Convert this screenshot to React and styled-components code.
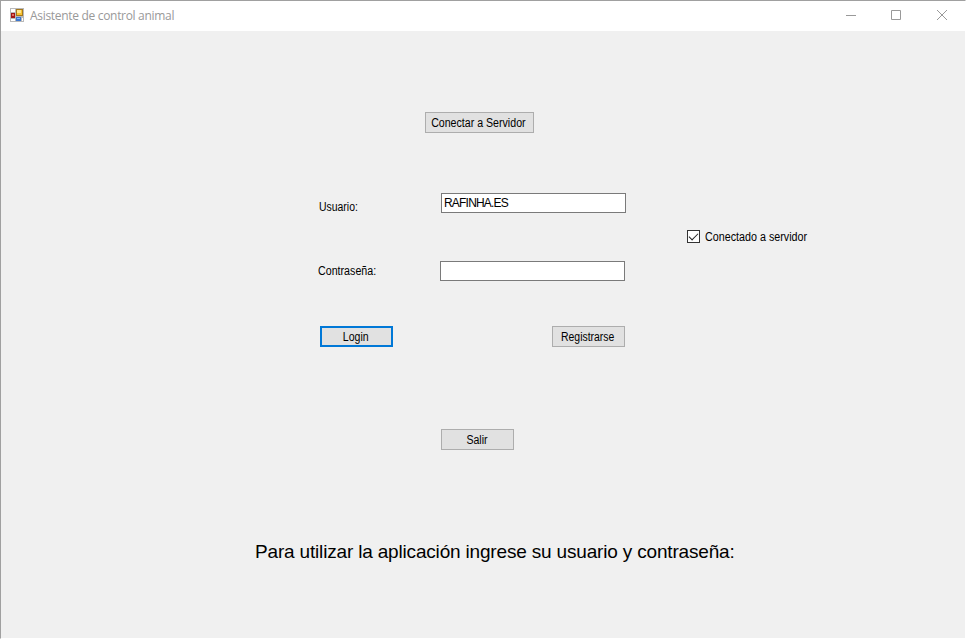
import React, { useState } from "react";
import styled, { createGlobalStyle } from "styled-components";

const GlobalStyle = createGlobalStyle`
  html, body { margin: 0; padding: 0; overflow: hidden; background: #fff; }
  *, *::before, *::after { box-sizing: border-box; }
`;

const Window = styled.main`
  width: 966px;
  height: 639px;
  display: flex;
  flex-direction: column;
  border: 1px solid #a0a0a0;
  border-right-color: #fff;
  border-bottom-color: #fff;
  background: #f0f0f0;
  color: #000;
  font: 12px/15px "Liberation Sans", Arial, sans-serif;
`;

const TitleBar = styled.header`
  height: 30px;
  flex: none;
  display: flex;
  align-items: center;
  padding-left: 9px;
  background: #fff;
`;

const Title = styled.h1`
  flex: 1;
  margin: 0 0 0 5px;
  color: #999;
  font: 400 12px/16px "Open Sans", "Noto Sans", sans-serif;
  letter-spacing: ${(p) => p.$spacing}px;
  white-space: nowrap;
`;

const AppIcon = styled.svg`
  width: 15px;
  height: 15px;
  flex: none;
  margin-bottom: 1px;
`;

const CaptionButton = styled.button`
  width: 46px;
  height: 30px;
  flex: none;
  display: grid;
  place-items: center;
  padding: 0 0 0 ${(p) => p.$shift || 0}px;
  border: 0;
  background: transparent;
  color: #999;
  svg { display: block; margin-top: -2px; }
`;

const Form = styled.form`
  flex: 1;
  display: flex;
  flex-direction: column;
  align-items: flex-start;
  padding-top: 81px;
`;

const Row = styled.div`
  display: flex;
  align-items: flex-start;
  height: ${(p) => p.$height}px;
  margin-top: ${(p) => p.$gap || 0}px;
  padding-left: ${(p) => p.$indent}px;
`;

const Text = styled.span`
  display: inline-block;
  transform: scaleX(${(p) => p.$narrow});
  transform-origin: ${(p) => p.$origin || "center"};
  white-space: nowrap;
`;

const Button = styled.button`
  width: ${(p) => p.$width || 73}px;
  height: 21px;
  display: flex;
  align-items: center;
  justify-content: center;
  margin-left: ${(p) => p.$offset || 0}px;
  padding: 2px ${(p) => p.$shift || 0}px 0 0;
  border: ${(p) => (p.$primary ? "2px solid #0078d7" : "1px solid #adadad")};
  background: #e1e1e1;
  color: #000;
  font: inherit;
  outline: none;
`;

const Label = styled.label`
  width: ${(p) => p.$width}px;
  flex: none;
  padding-top: ${(p) => p.$drop}px;
`;

const Input = styled.input`
  width: 185px;
  height: 20px;
  padding: 0 2px;
  border: 1px solid #7a7a7a;
  border-radius: 0;
  background: #fff;
  color: #000;
  font: inherit;
  letter-spacing: -0.8px;
  outline: none;
`;

const CheckLabel = styled.label`
  display: flex;
  align-items: center;
  gap: 5px;
  height: 15px;
  ${Text} { padding-top: 1px; }
`;

const CheckBox = styled.input`
  appearance: none;
  width: 13px;
  height: 13px;
  margin: 0;
  border: 1px solid #333;
  background: #fff;
  display: grid;
  place-items: center;
  &:checked::before {
    content: "";
    width: 9px;
    height: 5px;
    margin-top: -3px;
    border-left: 1.3px solid #222;
    border-bottom: 1.3px solid #222;
    transform: rotate(-45deg);
  }
`;

const Message = styled.p`
  margin: 91px 0 0 254px;
  font-size: 19px;
  line-height: 22px;
  letter-spacing: ${(p) => p.$spacing}px;
  white-space: nowrap;
`;

function FormIcon() {
  return (
    <AppIcon viewBox="0 0 15 15" shapeRendering="crispEdges">
      <path fill="#b9b9b9" d="M0 0h14v14H0z" />
      <path fill="#fff" d="M1 1h4v3H1zM1 11h4v2H1zM12 10h1v3h-1z" />
      <path fill="#a5781d" d="M6 1h7v7H6z" />
      <path fill="#f8c331" d="M7 2h5v5H7z" />
      <path fill="#ffe58d" d="M7 2h4v3H7z" />
      <path fill="#a11616" d="M1 5h4v5H1z" />
      <path fill="#e36b60" d="M2 6h2v2H2z" />
      <path fill="#3c76cf" d="M6 9h5v4H6z" />
      <path fill="#8bbbf6" d="M7 10h3v1H7z" />
    </AppIcon>
  );
}

export default function App() {
  const [user, setUser] = useState("RAFINHA.ES");
  const [password, setPassword] = useState("");
  const [connected, setConnected] = useState(true);
  return (
    <>
      <GlobalStyle />
      <Window>
        <TitleBar>
          <FormIcon />
          <Title $spacing={-0.31}>Asistente de control animal</Title>
          <CaptionButton aria-label="Minimizar" $shift={2}>
            <svg width="10" height="10" shapeRendering="crispEdges"><path d="M0 5h10v1H0z" fill="currentColor" /></svg>
          </CaptionButton>
          <CaptionButton aria-label="Maximizar">
            <svg width="10" height="10" fill="none" stroke="currentColor"><path d="M.5.5h9v9h-9z" /></svg>
          </CaptionButton>
          <CaptionButton aria-label="Cerrar">
            <svg width="10" height="10" stroke="currentColor"><path d="M0 0l10 10M10 0L0 10" /></svg>
          </CaptionButton>
        </TitleBar>
        <Form onSubmit={(e) => e.preventDefault()}>
          <Row $indent={424} $height={21}>
            <Button type="button" $width={109} $shift={2}><Text $narrow={0.885}>Conectar a Servidor</Text></Button>
          </Row>
          <Row $indent={318} $gap={60} $height={37}>
            <Label htmlFor="user" $width={122} $drop={7}><Text $narrow={0.87} $origin="left">Usuario:</Text></Label>
            <Input id="user" value={user} onChange={(e) => setUser(e.target.value)} />
          </Row>
          <Row $indent={686} $gap={-1} $height={15}>
            <CheckLabel>
              <CheckBox type="checkbox" checked={connected} onChange={(e) => setConnected(e.target.checked)} />
              <Text $narrow={0.895} $origin="left">Conectado a servidor</Text>
            </CheckLabel>
          </Row>
          <Row $indent={317} $gap={17} $height={20}>
            <Label htmlFor="password" $width={122} $drop={3}><Text $narrow={0.89} $origin="left">Contraseña:</Text></Label>
            <Input id="password" type="password" value={password} onChange={(e) => setPassword(e.target.value)} />
          </Row>
          <Row $indent={319} $gap={45} $height={21}>
            <Button $primary $shift={2}><Text $narrow={0.88}>Login</Text></Button>
            <Button type="button" $offset={159} $shift={2}><Text $narrow={0.87}>Registrarse</Text></Button>
          </Row>
          <Row $indent={440} $gap={82} $height={21}>
            <Button type="button" $shift={1}><Text $narrow={0.88}>Salir</Text></Button>
          </Row>
          <Message $spacing={-0.175}>Para utilizar la aplicación ingrese su usuario y contraseña:</Message>
        </Form>
      </Window>
    </>
  );
}
